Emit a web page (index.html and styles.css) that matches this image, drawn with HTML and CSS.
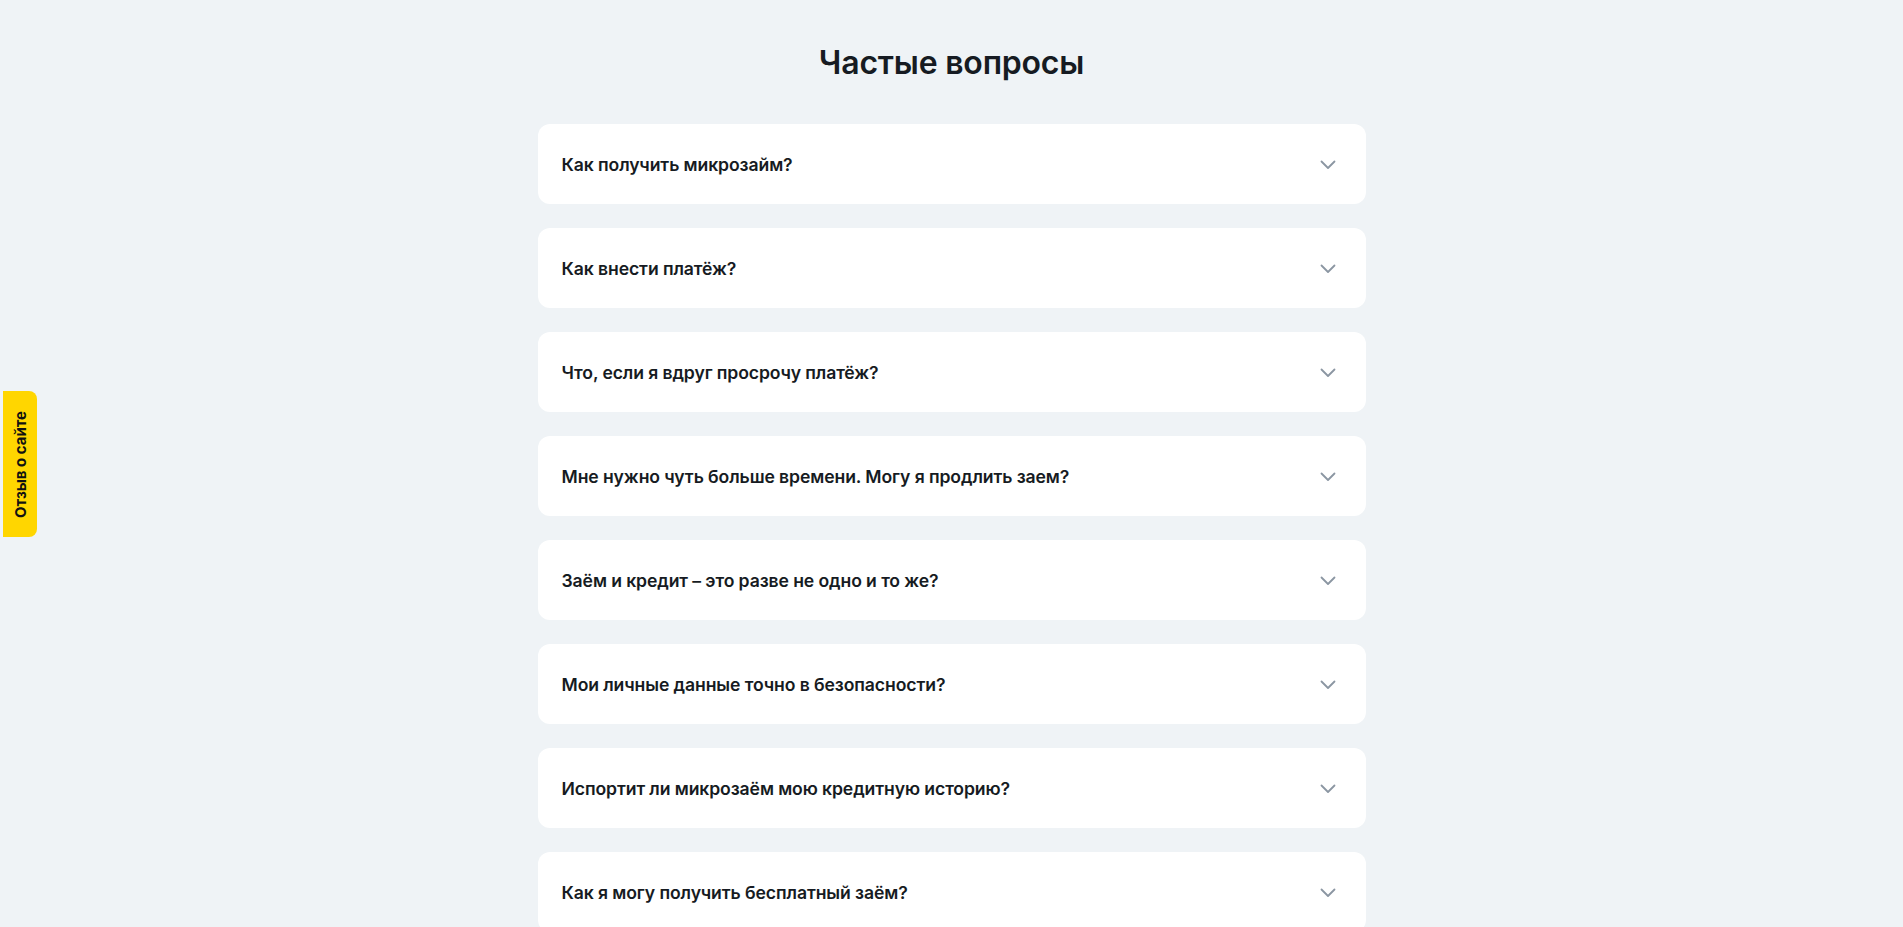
FILE: index.html
```html
<!DOCTYPE html>
<html lang="ru">
<head>
<meta charset="utf-8">
<title>Частые вопросы</title>
<link rel="stylesheet" href="styles.css">
</head>
<body>
<a class="feedback" href="#"><span>Отзыв о сайте</span></a>
<main class="faq">
  <h1 class="faq-title">Частые вопросы</h1>
  <div class="faq-list">
    <div class="faq-item"><span class="faq-q">Как получить микрозайм?</span><svg class="chev" viewBox="0 0 16 10" width="16" height="10"><path d="M1.5 1.5 L8 8 L14.5 1.5" fill="none" stroke="#8b96a2" stroke-width="1.8" stroke-linecap="round" stroke-linejoin="round"/></svg></div>
    <div class="faq-item"><span class="faq-q">Как внести платёж?</span><svg class="chev" viewBox="0 0 16 10" width="16" height="10"><path d="M1.5 1.5 L8 8 L14.5 1.5" fill="none" stroke="#8b96a2" stroke-width="1.8" stroke-linecap="round" stroke-linejoin="round"/></svg></div>
    <div class="faq-item"><span class="faq-q">Что, если я вдруг просрочу платёж?</span><svg class="chev" viewBox="0 0 16 10" width="16" height="10"><path d="M1.5 1.5 L8 8 L14.5 1.5" fill="none" stroke="#8b96a2" stroke-width="1.8" stroke-linecap="round" stroke-linejoin="round"/></svg></div>
    <div class="faq-item"><span class="faq-q">Мне нужно чуть больше времени. Могу я продлить заем?</span><svg class="chev" viewBox="0 0 16 10" width="16" height="10"><path d="M1.5 1.5 L8 8 L14.5 1.5" fill="none" stroke="#8b96a2" stroke-width="1.8" stroke-linecap="round" stroke-linejoin="round"/></svg></div>
    <div class="faq-item"><span class="faq-q">Заём и кредит – это разве не одно и то же?</span><svg class="chev" viewBox="0 0 16 10" width="16" height="10"><path d="M1.5 1.5 L8 8 L14.5 1.5" fill="none" stroke="#8b96a2" stroke-width="1.8" stroke-linecap="round" stroke-linejoin="round"/></svg></div>
    <div class="faq-item"><span class="faq-q">Мои личные данные точно в безопасности?</span><svg class="chev" viewBox="0 0 16 10" width="16" height="10"><path d="M1.5 1.5 L8 8 L14.5 1.5" fill="none" stroke="#8b96a2" stroke-width="1.8" stroke-linecap="round" stroke-linejoin="round"/></svg></div>
    <div class="faq-item"><span class="faq-q">Испортит ли микрозаём мою кредитную историю?</span><svg class="chev" viewBox="0 0 16 10" width="16" height="10"><path d="M1.5 1.5 L8 8 L14.5 1.5" fill="none" stroke="#8b96a2" stroke-width="1.8" stroke-linecap="round" stroke-linejoin="round"/></svg></div>
    <div class="faq-item"><span class="faq-q">Как я могу получить бесплатный заём?</span><svg class="chev" viewBox="0 0 16 10" width="16" height="10"><path d="M1.5 1.5 L8 8 L14.5 1.5" fill="none" stroke="#8b96a2" stroke-width="1.8" stroke-linecap="round" stroke-linejoin="round"/></svg></div>
  </div>
</main>
</body>
</html>
```
FILE: styles.css
```css
html, body {
  margin: 0;
  padding: 0;
  background: #eff3f6;
  font-family: Inter, "Noto Sans", sans-serif;
  color: #161b22;
}
.faq {
  width: 828px;
  margin: 0 auto;
  padding-top: 43px;
}
.faq-title {
  margin: 0 0 41px;
  text-align: center;
  font-size: 32px;
  line-height: 40px;
  font-weight: 600;
  letter-spacing: -0.2px;
}
.faq-list {
  display: flex;
  flex-direction: column;
  gap: 24px;
}
.faq-item {
  height: 80px;
  box-sizing: border-box;
  background: #fff;
  border-radius: 12px;
  padding: 0 30px 0 24px;
  display: flex;
  align-items: center;
  justify-content: space-between;
}
.faq-q {
  font-size: 17.6px;
  font-weight: 600;
  letter-spacing: -0.1px;
}
.chev {
  display: block;
  margin-top: 2px;
}
.feedback {
  position: fixed;
  left: 3px;
  top: 391px;
  width: 34px;
  height: 146px;
  background: #ffd600;
  border-radius: 0 8px 8px 0;
  display: flex;
  align-items: center;
  justify-content: center;
  text-decoration: none;
  color: #111;
}
.feedback span {
  writing-mode: vertical-rl;
  transform: rotate(180deg);
  font-size: 15px;
  font-weight: 700;
  white-space: nowrap;
}
```
